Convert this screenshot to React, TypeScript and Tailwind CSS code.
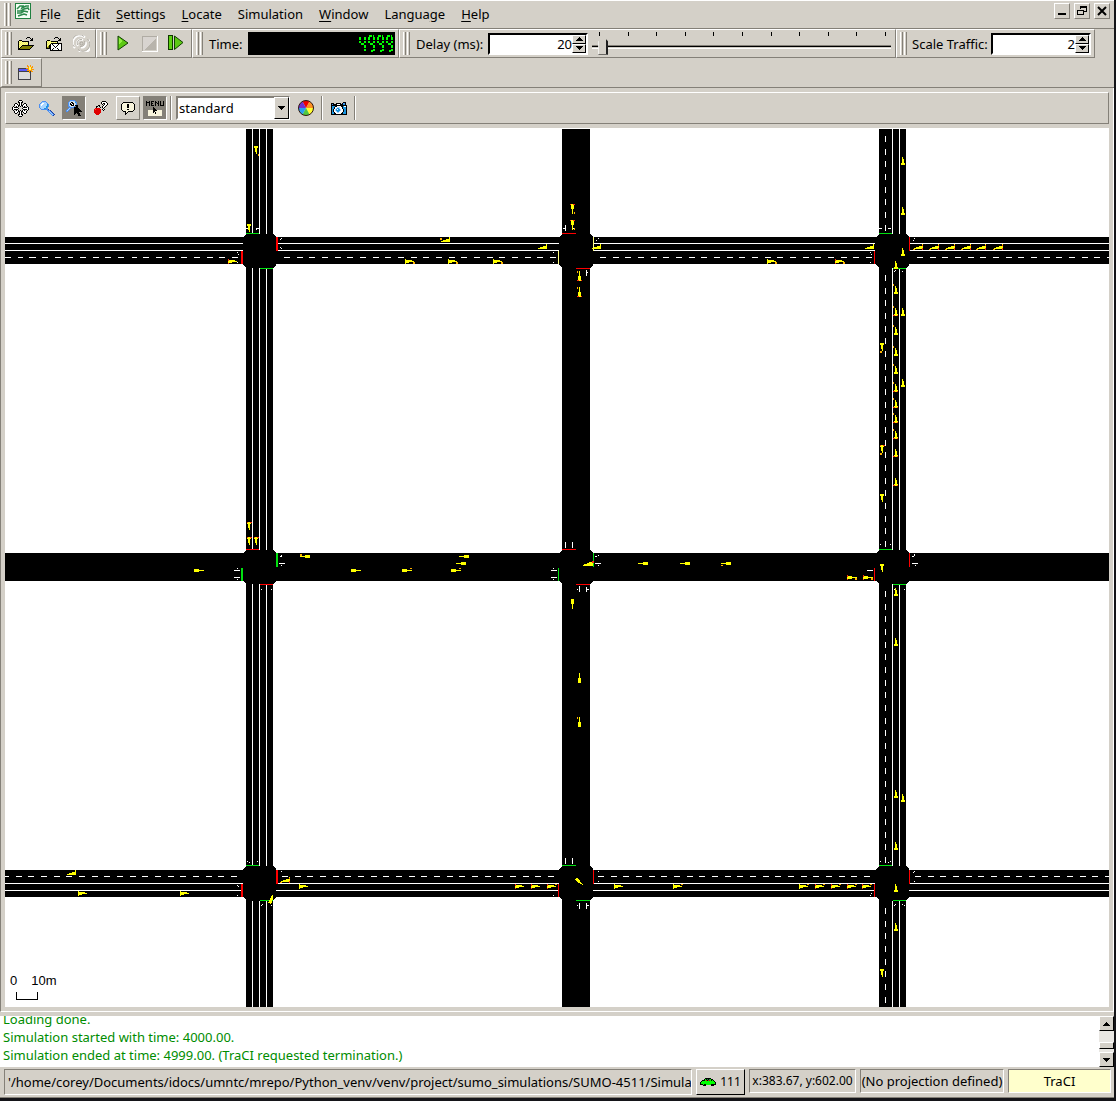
import { useState, type ReactNode } from "react";

const UI = "font-['Noto_Sans',sans-serif] text-[13px] leading-[18px] text-black";
const RAISED = "border border-t-white border-l-white border-r-[#848078] border-b-[#848078]";
const SUNKEN = "border border-t-[#848078] border-l-[#848078] border-r-white border-b-white";

/* ---------- toolbar pieces ---------- */

function Grip() {
  return (
    <div className="flex shrink-0 gap-px self-stretch py-[2px]">
      <div className="w-[3px] border-r border-l border-r-[#848078] border-l-white" />
      <div className="w-[3px] border-r border-l border-r-[#848078] border-l-white" />
    </div>
  );
}

function Group({ className, children }: { className: string; children: ReactNode }) {
  return (
    <div className={`flex h-[29px] shrink-0 items-center pl-[3px] ${RAISED} ${className}`}>
      <Grip />
      {children}
    </div>
  );
}

function Tool({ label, className = "", children }: { label: string; className?: string; children: ReactNode }) {
  return (
    <button aria-label={label} className={`flex shrink-0 items-center justify-center ${className}`}>
      {children}
    </button>
  );
}

function Svg({ children, w = 16, h = 16 }: { children: ReactNode; w?: number; h?: number }) {
  return (
    <svg width={w} height={h} viewBox={`0 0 ${w} ${h}`} className="shrink-0" shapeRendering="crispEdges" aria-hidden="true">
      {children}
    </svg>
  );
}

/* Pixel icons: each character is one pixel, looked up in the palette. */
const PALETTE: Record<string, string> = {
  k: "#000000", w: "#ffffff", y: "#f0f060", c: "#ffff90", o: "#808000", g: "#848078",
  b: "#4d8ff0", l: "#a8d4ff", d: "#1c3c9c", r: "#e00000", R: "#ff5040", n: "#1894e0",
  G: "#208040", e: "#00ff00", E: "#008000", s: "#e8e8e8", O: "#ff9000", p: "#f8f4dc",
};

function Pixels({ rows }: { rows: string[] }) {
  const w = Math.max(...rows.map((r) => r.length));
  return (
    <Svg w={w} h={rows.length}>
      {rows.flatMap((row, y) =>
        [...row].map((c, x) =>
          c === "." ? null : <rect key={`${x}-${y}`} x={x} y={y} width={1} height={1} fill={PALETTE[c]} />,
        ),
      )}
    </Svg>
  );
}

const FOLDER = [
  ".........kkk....",
  "........k...k.k.",
  ".............kk.",
  ".kkk........kkk.",
  "kcyckkkkkkk.....",
  "kycycycycyk.....",
  "kcycycycyck.....",
  "kycycycycyk.....",
  "kcyckkkkkkkkkkkk",
  "kyckooooooooook.",
  "kckooooooooook..",
  "kkooooooooook...",
  "kkkkkkkkkkkk....",
];
const FOLDER_NET = [
  ".........kkk....",
  "........k...k.k.",
  ".............kk.",
  ".kkk........kkk.",
  "kcycykkkkkkk....",
  "kycycycycyck....",
  "kcycykkkkkkkkkkk",
  "kycykwkwwwwwkwwk",
  "kcykkwwkwwwkwwwk",
  "kyokkwwwkwkwwwwk",
  "kookkwwwwkwwwwwk",
  "kkkkkwwkwwwkwwwk",
  "....kwkwwwwwkwwk",
  "....kkkkkkkkkkkk",
];
const MOVE = [
  ".......kkk.......",
  "......kwwwk......",
  "......kkwkk......",
  "...kk..kwk..kk...",
  "..kwwk.kwk.kwwk..",
  "..kwwwkkwkkwwwk..",
  ".k..kwk.k.kwk..k.",
  "kwkkkk.....kkkkwk",
  "kwwwwwk...kwwwwwk",
  "kwkkkk.....kkkkwk",
  ".k..kwk.k.kwk..k.",
  "..kwwwkkwkkwwwk..",
  "..kwwk.kwk.kwwk..",
  "...kk..kwk..kk...",
  "......kkwkk......",
  "......kwwwk......",
  ".......kkk.......",
];
const LENS = [
  "...bbbb.........",
  "..bllllb........",
  ".blwwlllb.......",
  "blwwllllnb......",
  "blwlllllnb......",
  "bllllllnnb......",
  "bllllllnb.......",
  ".blllnnbb.......",
  "..bbbbbbbd......",
  "........bbbd....",
  ".........blbd...",
  "..........blbd..",
  "...........blbd.",
  "............blbd",
  ".............bd.",
];
const LENS_CURSOR = [
  "....bbbbb........",
  "...bllsllb.......",
  "..blskkssnb......",
  "..blkwkkslb......",
  "..blkkwkslb......",
  "..blskkkskkk.....",
  "..bblsslb.kk.....",
  "...bbbbbkkkk.....",
  "..blb...kkkkk....",
  ".blb....kkkkkk...",
  "blb.....kkkkkkk..",
  "bb......kkkkkkkk.",
  "........kkkkk....",
  "........kk.kkk...",
  "........k...kk...",
  "............kkk..",
];
const CHERRY = [
  "........kkkk..",
  ".......kwwwwk.",
  ".......kwkkwwk",
  "........k.kwwk",
  "....kk...kwwk.",
  "..kk.k..kwwk..",
  "..k...k.kwk...",
  ".rrrrr...k....",
  "rRrrrrr.kwk...",
  "rrrrrrr..k....",
  "rrrrrrr.......",
  "rrrrrrr.......",
  ".rrrrr........",
  "..rrr.........",
];
const BUBBLE = [
  "..kkkkkkkkkk..",
  ".kppppppppppk.",
  "kpppppkkpppppk",
  "kpppppkkpppppk",
  "kpppppkkpppppk",
  "kpppppkkpppppk",
  "kppppppppppppk",
  "kpppppkkpppppk",
  ".kppppppppppk.",
  "..kkkppkkkkk..",
  "....kpk.......",
  "....kk........",
  "....k.........",
];
const MENU_ICON = [
  "k..k.kkk.k..k.k..k",
  "kkkk.k...kk.k.k..k",
  "k..k.kk..k.kk.k..k",
  "k..k.k...k..k.k..k",
  "k..k.kkk.k..k.kkkk",
  "..................",
  ".......k..........",
  ".......kk.........",
  ".......kkk........",
  "..pppppkkkkppppp..",
  "..pppppkkppppppp..",
  "..pppppkpkpppppp..",
  "..pppppppkpppppp..",
  "..pppppppppppppp..",
  "..pppppppppppppp..",
];
const CAMERA = [
  "............kkk.",
  "kkk..kkkkk.kbbk.",
  "kbkkkkwwwkkknnk.",
  "kkkkkkkkkkkkkkkk",
  "knnnkkwwwwkknwwk",
  "knnkwwlllwwknnnk",
  "knnkwlnnlwwknnnk",
  "knkwlnwnnlwwknnk",
  "knkwlnnnnlwwknnk",
  "knkwwlnnlwwwknnk",
  "knnkwwllwwwknnnk",
  "knnkkwwwwwkknnnk",
  "kkkkkkkkkkkkkkkk",
];
const CAR_ICON = [
  ".....kkkkkk.....",
  "....kekGkGekk...",
  "..kkkerkGrekek..",
  ".keeeeeeeeeeeek.",
  "keeeeeeeeeeeeeek",
  "keeeeeeeeeeeeeek",
  "kkkekkeeeeekkkkk",
  "...kkk.....kkk..",
];

function AppIcon() {
  return (
    <Svg w={16} h={16}>
      <rect x="0.5" y="0.5" width="15" height="15" fill="#f4fff4" stroke="#208040" />
      <path
        d="M2 6L5 3H8L7 5L11 3H14M2 8H6L9 6L13 5L14 7M2 10L6 10L9 8L13 9M3 13L6 12L9 11L12 12"
        stroke="#2c8a4c"
        strokeWidth="1.6"
        fill="none"
        shapeRendering="auto"
      />
    </Svg>
  );
}

function Play() {
  return (
    <Svg w={12} h={16}>
      <path d="M1 1L11 8L1 15Z" fill="#5cc814" stroke="#104000" shapeRendering="auto" />
      <path d="M2 3L6 6L2 9Z" fill="#90f040" />
    </Svg>
  );
}

function Step() {
  return (
    <Svg w={16} h={16}>
      <rect x="0.5" y="0.5" width="4" height="14" fill="#5cd010" stroke="#103800" />
      <path d="M6.5 1L15 7.5L6.5 14.5Z" fill="#5cc814" stroke="#104000" shapeRendering="auto" />
    </Svg>
  );
}

function Stop() {
  return (
    <Svg w={16} h={16}>
      <path d="M1 1H14V14H1Z" fill="#d8d4d0" />
      <path d="M14 2V14H2Z" fill="#b8b4ac" />
      <path d="M0.5 15V0.5H15" fill="none" stroke="#b0aca4" />
      <path d="M0 15.5H15.5V0" fill="none" stroke="#fff" />
    </Svg>
  );
}

function Reload() {
  return (
    <Svg w={17} h={17}>
      <g fill="none" shapeRendering="auto">
        <path d="M2 13A7 7 0 0 1 12 2.5M15.5 5A7 7 0 0 1 6 15.5M5 11A4 4 0 0 1 10 5M12.5 7A4 4 0 0 1 8 12.5" stroke="#fff" strokeWidth="2" />
        <path d="M1.5 12A7 7 0 0 1 11 1.5M14.5 4A7 7 0 0 1 5 14.5M4.5 10A4 4 0 0 1 9 4.5M11.5 6A4 4 0 0 1 7 11.5" stroke="#b4b0a8" />
        <circle cx="8.5" cy="8.5" r="1.5" stroke="#aaa69e" />
      </g>
    </Svg>
  );
}

function NewView() {
  return (
    <Svg w={17} h={16}>
      <rect x="1" y="3" width="13" height="12" fill="#404048" />
      <rect x="2" y="4" width="11" height="2" fill="#5858f8" />
      <rect x="2" y="7" width="11" height="7" fill="#dcdcdc" />
      <path d="M10 0h1v1h1v1h1V0h1v2h1V1h1v2h-1v1h2v1h-2v1h1v1h-2V6h-1v2h-1V6h-2V5h1V4h-2V3h2V2h-1z" fill="#ff9800" />
      <path d="M12 2h2v3h-2z" fill="#ffff60" />
    </Svg>
  );
}

function Wheel() {
  return (
    <Svg w={16} h={16}>
      <g shapeRendering="auto">
        <path d="M8 8L4.5 1.5A7.5 7.5 0 0 1 11.5 1.5Z" fill="#f00000" />
        <path d="M8 8L11.5 1.5A7.5 7.5 0 0 1 15.5 8Z" fill="#ff9020" />
        <path d="M8 8L15.5 8A7.5 7.5 0 0 1 11.5 14.5Z" fill="#ffff30" />
        <path d="M8 8L11.5 14.5A7.5 7.5 0 0 1 4.5 14.5Z" fill="#50c840" />
        <path d="M8 8L4.5 14.5A7.5 7.5 0 0 1 0.5 8Z" fill="#28a0f0" />
        <path d="M8 8L0.5 8A7.5 7.5 0 0 1 4.5 1.5Z" fill="#7030d0" />
        <circle cx="8" cy="8" r="7.5" fill="none" stroke="#301810" />
      </g>
    </Svg>
  );
}

/* ---------- seven segment clock ---------- */

const SEGMENTS: Record<string, string> = { "4": "bcfg", "9": "abcdfg" };
const SEGMENT_LINES: Record<string, [number, number, number, number]> = {
  a: [1, 1, 6, 1],
  b: [6, 2, 6, 8],
  c: [6, 10, 6, 16],
  d: [3, 16, 5, 16],
  f: [1, 2, 1, 8],
  g: [2, 9, 5, 9],
};

function Clock({ value }: { value: string }) {
  return (
    <svg role="img" aria-label={value} width={value.length * 9} height={19} shapeRendering="crispEdges">
      {[...value].map((digit, i) => (
        <g key={i} transform={`translate(${i * 9} 1)`} stroke="#00ff00" strokeWidth={2} strokeDasharray="3 1">
          {[...SEGMENTS[digit]].map((s) => {
            const [x1, y1, x2, y2] = SEGMENT_LINES[s];
            return <line key={s} x1={x1} y1={y1} x2={x2} y2={y2} />;
          })}
        </g>
      ))}
    </svg>
  );
}

function Arrow({ up }: { up?: boolean }) {
  return (
    <Svg w={7} h={4}>
      <path d={up ? "M3 0h1v1h1v1h1v1h1v1H0V3h1V2h1V1h1z" : "M0 0h7v1H6v1H5v1H4v1H3V3H2V2H1V1H0z"} fill="#000" />
    </Svg>
  );
}

const KNOB = "flex items-center justify-center bg-[#d4d0c8] border border-t-white border-l-white border-r-black border-b-black";

function Spinner({ id, start }: { id: string; start: number }) {
  const [value, setValue] = useState(start);
  return (
    <div className="flex h-[22px] w-[100px] shrink-0 border-2 border-t-black border-r-white border-b-white border-l-black bg-white">
      <input
        id={id}
        value={value}
        onChange={(e) => setValue(Number(e.target.value) || 0)}
        className="min-w-0 flex-1 bg-white text-right outline-none"
      />
      <div className="flex w-[14px] flex-col">
        <button aria-label="Increase" onClick={() => setValue(value + 1)} className={`h-[9px] ${KNOB}`}>
          <Arrow up />
        </button>
        <button aria-label="Decrease" onClick={() => setValue(value - 1)} className={`h-[9px] ${KNOB}`}>
          <Arrow />
        </button>
      </div>
    </div>
  );
}

/* ---------- road network ---------- */

type Dir = "e" | "w" | "n" | "s";
/* x and y give the rear centre; flags: b = brake lights, l / r = blinkers, t = slim front on unmarked roads */
type Car = [number, number, Dir, string?];

const CARS: Car[] = [
  [228, 261, "e", "b"], [405, 261, "e", "r"], [448, 261, "e", "r"], [493, 261, "e", "r"],
  [767, 261, "e", "r"], [835, 261, "e", "br"],
  [449, 240, "w", "r"], [546, 247, "w"], [600, 247, "w"], [873, 247, "w"],
  [922, 247, "w", "bl"], [938, 247, "w", "bl"], [954, 247, "w", "bl"], [970, 247, "w", "bl"],
  [985, 247, "w", "bl"], [1002, 247, "w", "bl"],
  [256, 146, "s", "l"], [249, 224, "s"], [249, 522, "s", "b"], [249, 537, "s", "b"], [256, 537, "s", "b"],
  [572, 204, "s", "tbl"], [572, 220, "s", "tbl"], [572, 599, "s", "t"],
  [579, 280, "n", "tbl"], [579, 296, "n", "tbl"], [579, 682, "n", "t"], [579, 726, "n", "tl"],
  [902, 164, "n"], [902, 214, "n"], [902, 255, "n"], [895, 268, "n"],
  [895, 293, "n", "l"], [895, 315, "n", "bl"], [895, 334, "n", "l"], [895, 355, "n", "l"],
  [895, 373, "n", "l"], [895, 391, "n", "bl"], [895, 407, "n", "bl"], [895, 422, "n", "bl"],
  [895, 438, "n", "bl"], [895, 456, "n", "b"], [895, 485, "n", "b"],
  [902, 315, "n"], [902, 386, "n"],
  [882, 343, "s", "r"], [882, 445, "s", "br"], [882, 494, "s"], [882, 564, "s"], [882, 969, "s"],
  [895, 595, "n"], [895, 645, "n"], [895, 797, "n"], [902, 801, "n"], [895, 849, "n"],
  [895, 891, "n"], [895, 930, "n"],
  [309, 556, "w", "tr"], [468, 556, "w", "t"], [465, 563, "w", "t"],
  [647, 563, "w", "t"], [689, 563, "w", "t"], [730, 563, "w", "tl"],
  [194, 570, "e", "t"], [351, 570, "e", "t"], [402, 570, "e", "tl"], [451, 570, "e", "tl"],
  [847, 577, "e", "tbr"], [863, 577, "e", "tbr"],
  [75, 873, "w"], [78, 893, "e"], [180, 893, "e"], [289, 880, "w", "bl"],
  [299, 886, "e"], [515, 886, "e", "b"], [531, 886, "e", "b"], [547, 886, "e", "bl"],
  [614, 886, "e"], [673, 886, "e", "l"], [799, 886, "e", "l"],
  [815, 886, "e", "bl"], [831, 886, "e", "bl"], [847, 886, "e", "bl"], [862, 886, "e", "bl"],
];

function place(x: number, y: number, dir: Dir, u: number, v: number, w: number, h: number) {
  if (dir === "e") return { x: x + u, y: y + v, width: w, height: h };
  if (dir === "w") return { x: x - u - w + 1, y: y - v - h + 1, width: w, height: h };
  if (dir === "s") return { x: x - v - h + 1, y: y + u, width: h, height: w };
  return { x: x + v, y: y - u - w + 1, width: h, height: w };
}

/* along, across, length, breadth of each block of the body */
const BODY_SLIM = [[0, -1, 5, 3], [5, 0, 5, 1]];
const BODY_EAST = [[0, -2, 1, 5], [1, -1, 3, 3], [4, -1, 3, 2], [7, 0, 2, 1]];
const BODY_WEST = [[0, -1, 1, 5], [1, -1, 3, 3], [4, -1, 3, 2], [7, -1, 2, 1]];
const BODY_UPRIGHT = [[0, -1, 2, 4], [2, 0, 4, 2], [6, 0, 2, 1]];

function Vehicle({ car: [x, y, dir, flags = ""] }: { car: Car }) {
  const at = (u: number, v: number, w: number, h: number) => place(x, y, dir, u, v, w, h);
  const body = flags.includes("t") ? BODY_SLIM : dir === "e" ? BODY_EAST : dir === "w" ? BODY_WEST : BODY_UPRIGHT;
  return (
    <g fill="#ffff00">
      {body.map(([u, v, w, h]) => (
        <rect key={u} {...at(u, v, w, h)} />
      ))}
      {flags.includes("b") && (
        <g fill="#ff3010">
          <rect {...at(0, -2, 1, 2)} />
          <rect {...at(0, 2, 1, 1)} />
        </g>
      )}
      {flags.includes("r") && <rect {...at(8, 1, 2, 2)} fill="#ffb000" />}
      {flags.includes("l") && <rect {...at(8, -2, 2, 1)} fill="#ffb000" />}
    </g>
  );
}

const RED = "#ff0000";
const GREEN = "#00e010";
const PALE = "#ffff80";
/* junction column and row starts, then the signal colours: top, right, bottom, left */
const JUNCTIONS: [number, number, string, string, string, string][] = [
  [246, 237, GREEN, RED, GREEN, RED],
  [562, 237, RED, PALE, RED, PALE],
  [879, 237, GREEN, RED, GREEN, RED],
  [246, 553, RED, GREEN, RED, GREEN],
  [562, 553, RED, GREEN, RED, GREEN],
  [879, 553, GREEN, RED, GREEN, RED],
  [246, 869, GREEN, RED, GREEN, RED],
  [562, 869, GREEN, RED, GREEN, RED],
  [879, 869, GREEN, RED, GREEN, RED],
];

/* lane arrows that remain visible as single pixels or short strokes */
const MARKS: [number, number, number, number][] = [
  [281, 238, 1, 1], [280, 239, 1, 1], [280, 247, 1, 1], [281, 248, 1, 1], [237, 252, 1, 1], [238, 254, 1, 1], [237, 262, 1, 1],
  [256, 228, 3, 1], [256, 229, 1, 1], [246, 228, 2, 1],
  [565, 225, 1, 6], [563, 228, 2, 1], [573, 228, 2, 1], [598, 238, 1, 1], [596, 240, 1, 1], [553, 252, 1, 1], [553, 262, 1, 1],
  [586, 270, 1, 6], [587, 272, 1, 1],
  [879, 228, 3, 1], [888, 228, 3, 1], [914, 238, 1, 1], [913, 240, 1, 1], [870, 252, 1, 1], [871, 254, 1, 1], [870, 262, 1, 1],
  [895, 270, 1, 1], [894, 271, 1, 1], [902, 271, 1, 1],
  [280, 556, 2, 1], [281, 555, 1, 1], [279, 563, 6, 1], [281, 565, 1, 1],
  [234, 570, 6, 1], [237, 568, 1, 1], [234, 577, 6, 1], [237, 579, 1, 1], [261, 589, 1, 1], [271, 589, 1, 1],
  [565, 542, 1, 6], [572, 542, 1, 6], [595, 556, 2, 1], [598, 555, 1, 1], [595, 563, 6, 1], [598, 565, 1, 1],
  [551, 570, 6, 1], [553, 568, 1, 1], [551, 577, 6, 1], [553, 579, 1, 1],
  [577, 589, 1, 1], [579, 586, 1, 6], [586, 587, 1, 5], [587, 589, 2, 1],
  [880, 544, 1, 1], [890, 544, 1, 1], [912, 556, 2, 1], [914, 554, 1, 2], [912, 563, 6, 1], [915, 565, 1, 1], [867, 570, 6, 1],
  [894, 589, 1, 1], [904, 589, 1, 1],
  [247, 861, 1, 1], [249, 862, 1, 1], [257, 861, 1, 1], [281, 871, 1, 1], [237, 885, 1, 1], [238, 886, 1, 1], [237, 895, 1, 1],
  [262, 904, 1, 1], [261, 905, 1, 1], [271, 905, 1, 1],
  [565, 858, 1, 6], [572, 858, 1, 6], [598, 871, 1, 1], [598, 881, 1, 1], [553, 895, 1, 1],
  [577, 905, 1, 1], [579, 903, 1, 6], [586, 903, 1, 6], [587, 905, 2, 1],
  [880, 861, 1, 1], [888, 862, 1, 1], [890, 861, 1, 1], [914, 871, 1, 1], [913, 872, 1, 1], [914, 881, 1, 1],
  [871, 893, 1, 1], [870, 895, 1, 1], [894, 905, 1, 1], [895, 904, 1, 1], [902, 904, 1, 1], [904, 905, 1, 1],
];

/* lane dashes: x1, y1, x2, y2 */
const DASHES: [number, number, number, number][] = [
  [4, 257, 241, 257], [283, 257, 558, 257], [599, 257, 874, 257], [916, 257, 3000, 257],
  [2, 876, 241, 876], [281, 876, 558, 876], [597, 876, 874, 876], [914, 876, 3000, 876],
  [885, 135, 885, 232], [885, 274, 885, 549], [885, 590, 885, 865], [885, 907, 885, 2100],
];

function RoadMap() {
  return (
    <svg role="img" aria-label="Traffic simulation" className="block min-h-0 w-full flex-1 bg-white" shapeRendering="crispEdges">
      <g transform="translate(-5 -128)">
        <g fill="#000">
          <rect x="246" y="129" width="27" height="2000" />
          <rect x="562" y="129" width="28" height="2000" />
          <rect x="879" y="129" width="27" height="2000" />
          <rect x="0" y="237" width="3000" height="27" />
          <rect x="0" y="553" width="3000" height="28" />
          <rect x="0" y="870" width="3000" height="27" />
        </g>
        <g fill="#fff">
          {[252, 259, 266, 892, 899].map((x) =>
            [[129, 105], [268, 282], [584, 283], [901, 1200]].map(([y, h]) => (
              <rect key={`${x}-${y}`} x={x} y={y} width="1" height={h} />
            )),
          )}
          {[243, 250, 883, 890].map((y) =>
            [[0, 243], [276, 283], [593, 282], [909, 2000]].map(([x, w]) => (
              <rect key={`${x}-${y}`} x={x} y={y} width={w} height="1" />
            )),
          )}
        </g>
        <g stroke="#fff" strokeDasharray="6 7 6 6 6 7" transform="translate(0.5 0.5)">
          {DASHES.map(([x1, y1, x2, y2]) => (
            <line key={`${x1}-${y1}`} x1={x1} y1={y1} x2={x2} y2={y2} />
          ))}
        </g>
        {JUNCTIONS.map(([x, y, top, right, bottom, left]) => {
          const thick = x === 246 ? 2 : 1;
          const extra = x === 562 ? 1 : 0;
          return (
            <g key={`${x}-${y}`}>
              <path
                d={`M${x} ${y - 3}H${x + 27 + extra}L${x + 30 + extra} ${y}V${y + 28}L${x + 27 + extra} ${y + 31}H${x}L${x - 3} ${y + 28}V${y}Z`}
                fill="#000"
              />
              <rect x={x} y={y - 4} width={13 + extra} height="1" fill={top} />
              <rect x={x + 14} y={y + 31} width={13 + extra} height="1" fill={bottom} />
              <rect x={x + 30 + extra} y={y + (y === 869 ? 1 : 0)} width={thick} height="14" fill={right} />
              <rect x={x - 5 + extra} y={y + (y === 237 ? 14 : 15)} width={thick} height="13" fill={left} />
            </g>
          );
        })}
        <g fill="#fff">
          {MARKS.map(([x, y, w, h]) => (
            <rect key={`${x}-${y}`} x={x} y={y} width={w} height={h} />
          ))}
        </g>
        {CARS.map((car) => (
          <Vehicle key={`${car[0]}-${car[1]}`} car={car} />
        ))}
        <g fill="#ffff00">
          <path d="M583 566V565L588 563L593 561V566Z" />
          <path d="M592 561h2v2h-2z" fill="#ff3010" />
          <path d="M575 879L577 877L580 881L583 885L577 882Z" />
          <path d="M273 894V899L271 904L268 903L270 899Z" />
        </g>
      </g>
    </svg>
  );
}

/* ---------- page ---------- */

const MENUS: [string, string, string][] = [
  ["", "F", "ile"],
  ["", "E", "dit"],
  ["", "S", "ettings"],
  ["", "L", "ocate"],
  ["Simulation", "", ""],
  ["", "W", "indow"],
  ["Langua", "g", "e"],
  ["", "H", "elp"],
];

function Divider() {
  return <div className="h-[24px] w-[2px] shrink-0 border-r border-l border-r-white border-l-[#848078]" />;
}

export default function App() {
  const [delay, setDelay] = useState(22);
  return (
    <div className={`flex h-screen min-h-[500px] flex-col bg-[#141418] pr-[2px] pb-[3px] ${UI}`}>
      <div className="flex min-h-0 flex-1 flex-col overflow-hidden bg-[#d4d0c8]">
        <header className="flex h-[29px] shrink-0 items-center border-t border-b border-t-white border-b-[#848078] pl-[4px]">
          <Grip />
          <div className="flex h-full items-start pt-[2px] pl-[4px]">
            <AppIcon />
          </div>
          <nav className="flex pb-[2px] pl-px" aria-label="Main menu">
            {MENUS.map(([before, key, after]) => (
              <button key={before + key + after} className="px-[8px]">
                {before}
                <span className="underline underline-offset-2">{key}</span>
                {after}
              </button>
            ))}
          </nav>
          <div className="ml-auto flex h-full items-start gap-[4px] pt-[2px] pr-[4px]">
            <Tool label="Minimize" className={`size-[16px] ${RAISED}`}>
              <Svg w={10} h={10}><rect x="1" y="7" width="8" height="2" /></Svg>
            </Tool>
            <Tool label="Restore" className={`size-[16px] ${RAISED}`}>
              <Svg w={10} h={10}>
                <path d="M3.5 3V1H9.5V5.500H7M0.5 4.500H6.500V8.500H0.500Z" fill="none" stroke="#000" />
                <path d="M3 0h7v2H3zM0 4h7v1H0z" />
              </Svg>
            </Tool>
            <Tool label="Close" className={`size-[16px] ${RAISED}`}>
              <Svg w={10} h={10}><path d="M1 1L9 9M9 1L1 9" stroke="#000" strokeWidth="2" shapeRendering="auto" /></Svg>
            </Tool>
          </div>
        </header>

        <div className="flex shrink-0 overflow-hidden pl-px">
          <Group className="w-[95px]">
            <Tool label="Open simulation" className="size-[28px]"><Pixels rows={FOLDER} /></Tool>
            <Tool label="Open network" className="size-[28px]"><Pixels rows={FOLDER_NET} /></Tool>
            <Tool label="Reload" className="h-[28px] w-[26px]"><Reload /></Tool>
          </Group>
          <Group className="w-[96px]">
            <div className="flex pl-[2px]">
              <Tool label="Run" className="size-[27px]"><Play /></Tool>
              <Tool label="Stop" className="size-[28px]"><Stop /></Tool>
              <Tool label="Single step" className="h-[27px] w-[24px]"><Step /></Tool>
            </div>
          </Group>
          <Group className="w-[207px]">
            <span className="w-[45px] pl-[6px]">Time:</span>
            <div className="flex h-[23px] w-[147px] items-center justify-end bg-black">
              <Clock value="4999" />
            </div>
          </Group>
          <Group className="w-[497px]">
            <label htmlFor="delay" className="w-[78px] pl-[6px]">Delay (ms):</label>
            <Spinner id="delay" start={20} />
            <div className="flex h-full flex-1 flex-col pt-[2px] pr-[4px] pl-[4px]">
              <div className="flex h-[4px] justify-between pr-[5px] pl-[7px]">
                {Array.from({ length: 11 }, (_, i) => (
                  <div key={i} className="w-px bg-black" />
                ))}
              </div>
              <input
                type="range"
                aria-label="Delay slider"
                min={0}
                max={1000}
                value={delay}
                onChange={(e) => setDelay(Number(e.target.value))}
                className="h-[19px] w-full appearance-none bg-[linear-gradient(#848078,#848078),linear-gradient(#000,#000),linear-gradient(#fff,#fff)] bg-[length:100%_1px,100%_1px,100%_1px] bg-[position:0_9px,0_10px,0_12px] bg-no-repeat [&::-webkit-slider-thumb]:h-[18px] [&::-webkit-slider-thumb]:w-[10px] [&::-webkit-slider-thumb]:appearance-none [&::-webkit-slider-thumb]:border [&::-webkit-slider-thumb]:border-t-0 [&::-webkit-slider-thumb]:border-r-2 [&::-webkit-slider-thumb]:border-white [&::-webkit-slider-thumb]:border-r-[#202020] [&::-webkit-slider-thumb]:border-b-black [&::-webkit-slider-thumb]:bg-[#d4d0c8] [&::-webkit-slider-thumb]:[clip-path:polygon(50%_0,100%_28%,100%_100%,0_100%,0_28%)]"
              />
            </div>
          </Group>
          <Group className="w-[199px]">
            <label htmlFor="scale" className="w-[84px] pl-[5px]">Scale Traffic:</label>
            <Spinner id="scale" start={2} />
          </Group>
        </div>

        <div className="flex h-[30px] shrink-0 items-start border-b border-[#848078] pl-px">
          <Group className="w-[41px]">
            <Tool label="New view" className="h-[28px] w-[27px]"><NewView /></Tool>
          </Group>
        </div>

        <main className="flex min-h-0 flex-1 flex-col border-r border-b border-l border-r-white border-b-white border-l-[#848078] p-[4px]">
          <div className={`mb-[4px] flex h-[32px] shrink-0 items-center gap-[3px] pl-[2px] ${RAISED}`}>
            <Tool label="Recenter view" className="size-[24px]"><Pixels rows={MOVE} /></Tool>
            <Tool label="Edit viewport" className="size-[24px]"><Pixels rows={LENS} /></Tool>
            <Tool label="Zoom style" className={`size-[24px] bg-[#848078] ${SUNKEN}`}><Pixels rows={LENS_CURSOR} /></Tool>
            <Tool label="Locate" className="size-[24px]"><Pixels rows={CHERRY} /></Tool>
            <Tool label="Show tooltips" className={`size-[24px] ${RAISED}`}><Pixels rows={BUBBLE} /></Tool>
            <Tool label="Toggle menu" className={`size-[24px] bg-[#848078] ${SUNKEN}`}><Pixels rows={MENU_ICON} /></Tool>
            <Divider />
            <div className="relative ml-px flex h-[24px] w-[114px]">
              <select
                aria-label="Coloring scheme"
                className="h-full w-full appearance-none border-2 border-t-[#848078] border-r-white border-b-white border-l-[#848078] bg-white pl-px text-[13px] outline-none"
              >
                <option>standard</option>
              </select>
              <div className={`pointer-events-none absolute top-px right-px h-[22px] w-[15px] ${KNOB}`}>
                <Arrow />
              </div>
            </div>
            <Tool label="Edit coloring" className="size-[25px]"><Wheel /></Tool>
            <Divider />
            <Tool label="Snapshot" className="size-[25px]"><Pixels rows={CAMERA} /></Tool>
            <Divider />
          </div>
          <div className="relative flex min-h-0 flex-1">
            <RoadMap />
            <div className="absolute bottom-[7px] left-[5px] font-['Liberation_Sans',sans-serif] text-[13px] leading-[15px]">
              <div className="flex gap-[14px]"><span>0</span><span>10m</span></div>
              <div className="mt-[4px] ml-[6px] h-[8px] w-[22px] border-r border-b border-l border-black" />
            </div>
          </div>
        </main>

        <section aria-label="Messages" className="mt-[4px] flex h-[51px] shrink-0 bg-white">
          <div className="flex min-w-0 flex-1 flex-col justify-end overflow-hidden pb-[3px] pl-[3px] whitespace-nowrap text-[#008c00]">
            <p>Loading done.</p>
            <p>Simulation started with time: 4000.00.</p>
            <p>Simulation ended at time: 4999.00. (TraCI requested termination.)</p>
          </div>
          <div className="flex w-[15px] flex-col bg-[#e9e7e3]">
            <button aria-label="Scroll up" className={`h-[15px] ${KNOB}`}><Arrow up /></button>
            <div className="flex-1" />
            <div className={`h-[7px] ${KNOB}`} />
            <div className="h-[3px]" />
            <button aria-label="Scroll down" className={`h-[15px] ${KNOB}`}><Arrow /></button>
          </div>
        </section>

        <footer className="flex h-[31px] shrink-0 items-start gap-[4px] border-b border-[#848078] pt-[2px] pr-[3px] pl-[4px] whitespace-nowrap">
          <div className={`flex h-[26px] min-w-0 flex-1 items-center overflow-hidden pl-[3px] ${SUNKEN}`}>
            '/home/corey/Documents/idocs/umntc/mrepo/Python_venv/venv/project/sumo_simulations/SUMO-4511/Simulation
          </div>
          <button className="flex h-[26px] w-[49px] items-center justify-center gap-[4px] border border-t-white border-r-black border-b-black border-l-white">
            <Pixels rows={CAR_ICON} />
            <span className="text-[12px]">111</span>
          </button>
          <div className={`flex h-[24px] w-[107px] items-center justify-center text-[12px] ${SUNKEN}`}>x:383.67, y:602.00</div>
          <div className={`flex h-[24px] w-[144px] items-center justify-center ${SUNKEN}`}>(No projection defined)</div>
          <div className={`flex h-[24px] w-[103px] items-center justify-center bg-[#ffffcc] ${SUNKEN}`}>TraCI</div>
        </footer>
      </div>
    </div>
  );
}
